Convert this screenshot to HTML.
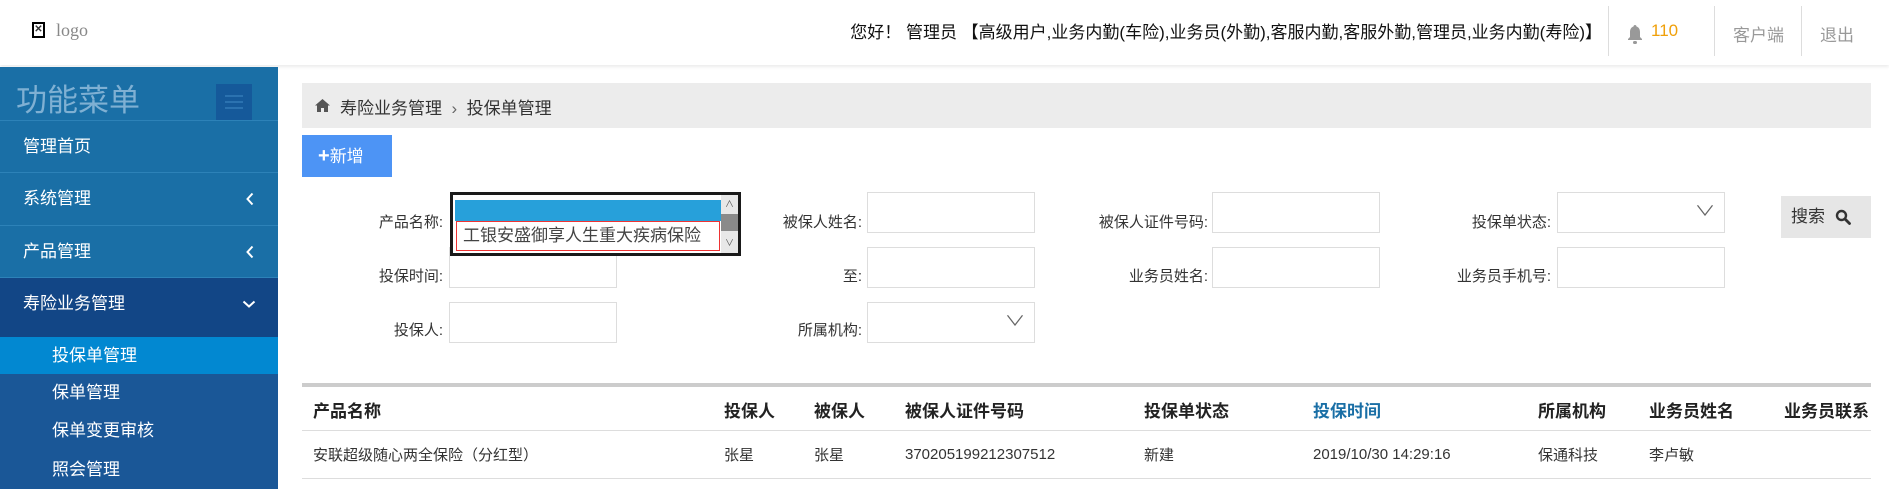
<!DOCTYPE html>
<html><head><meta charset="utf-8"><style>
*{margin:0;padding:0;box-sizing:border-box}
body{width:1889px;height:489px;overflow:hidden;background:#fff;font-family:"Liberation Sans","Noto Sans CJK SC",sans-serif;font-size:17px;color:#333;position:relative}
.a{position:absolute;white-space:nowrap}
.hdr{left:0;top:0;width:1889px;height:65px;background:#fff;box-shadow:0 2px 3px rgba(0,0,0,.08)}
.sep{position:absolute;top:6px;width:1px;height:50px;background:#ddd}
.side{left:0;top:67px;width:278px;height:422px;background:#1a6fa6}
.mi{position:absolute;left:0;width:278px;color:#fff;padding-left:23px;border-top:1px solid #2d82b8}
.sub{position:absolute;left:0;width:278px;color:#fff;padding-left:52px;font-size:17px}
.chev{position:absolute;right:24px;top:19px}
.lbl{position:absolute;text-align:right;font-size:15px;color:#333}
.inp{position:absolute;border:1px solid #ddd;background:#fff;height:41px;width:168px}
.th{position:absolute;top:397px;font-weight:bold;font-size:17px;color:#222}
.td{position:absolute;top:444px;font-size:15px;color:#333}
</style></head><body>
<div class="a hdr">
 <div class="a" style="left:32px;top:22px;width:13px;height:16px;border:2px solid #000;font-size:10px;line-height:11px;text-align:center;font-weight:bold">✕</div>
 <div class="a" style="left:56px;top:20px;font-family:'Liberation Serif',serif;font-size:18px;color:#888">logo</div>
 <div class="a" style="right:287px;top:18px;font-size:17px;color:#111">您好！ 管理员 【高级用户,业务内勤(车险),业务员(外勤),客服内勤,客服外勤,管理员,业务内勤(寿险)】</div>
 <div class="sep" style="left:1608px"></div><div class="sep" style="left:1714px"></div><div class="sep" style="left:1801px"></div>
 <svg class="a" style="left:1627px;top:24px" width="16" height="20" viewBox="0 0 16 20"><path d="M8 1c-1 0-1.5.8-1.5 1.5C4 3.3 3 5.5 3 8v5l-2 2v1h14v-1l-2-2V8c0-2.5-1-4.7-3.5-5.5C9.5 1.8 9 1 8 1z" fill="#999"/><rect x="6" y="17" width="4" height="3" rx="1.5" fill="#999"/></svg>
 <div class="a" style="left:1651px;top:21px;color:#f0a00a;font-size:17px">110</div>
 <div class="a" style="left:1733px;top:21px;color:#999;font-size:17px">客户端</div>
 <div class="a" style="left:1820px;top:21px;color:#999;font-size:17px">退出</div>
</div>
<div class="a side">
 <div class="a" style="left:16px;top:8px;font-size:31px;color:#7fb0d3">功能菜单</div>
 <div class="a" style="left:216px;top:17px;width:36px;height:36px;background:#15599a">
  <div class="a" style="left:9px;top:11px;width:18px;height:2px;background:#2b72b0"></div>
  <div class="a" style="left:9px;top:17px;width:18px;height:2px;background:#2b72b0"></div>
  <div class="a" style="left:9px;top:23px;width:18px;height:2px;background:#2b72b0"></div>
 </div>
 <div class="mi" style="top:53px;height:52px;line-height:52px">管理首页</div>
 <div class="mi" style="top:105px;height:53px;line-height:52px">系统管理<svg class="chev" width="8" height="14" viewBox="0 0 8 14"><path d="M6.5 1.5L1.5 7l5 5.5" stroke="#fff" stroke-width="2" fill="none"/></svg></div>
 <div class="mi" style="top:158px;height:52px;line-height:52px">产品管理<svg class="chev" width="8" height="14" viewBox="0 0 8 14"><path d="M6.5 1.5L1.5 7l5 5.5" stroke="#fff" stroke-width="2" fill="none"/></svg></div>
 <div class="mi" style="top:210px;height:60px;line-height:52px;background:#124686;border-top:1px solid #2d82b8">寿险业务管理<svg class="chev" style="top:22px;right:22px" width="14" height="8" viewBox="0 0 14 8"><path d="M1.5 1.5L7 6.5l5.5-5" stroke="#fff" stroke-width="2" fill="none"/></svg></div>
 <div class="a" style="left:0;top:270px;width:278px;height:152px;background:#1a5797"></div>
 <div class="sub" style="top:270px;height:37px;line-height:37px;background:#0288d1">投保单管理</div>
 <div class="sub" style="top:307px;height:38px;line-height:38px">保单管理</div>
 <div class="sub" style="top:345px;height:38px;line-height:38px">保单变更审核</div>
 <div class="sub" style="top:383px;height:39px;line-height:39px">照会管理</div>
</div>
<div class="a" style="left:302px;top:83px;width:1569px;height:45px;background:#ececec"></div>
<svg class="a" style="left:315px;top:99px" width="15" height="13" viewBox="0 0 15 13"><path d="M7.5 0L0 6.5h2V13h4V9h3v4h4V6.5h2z" fill="#555"/></svg>
<div class="a" style="left:340px;top:94px;font-size:17px;color:#333">寿险业务管理 &nbsp;<span style="color:#666">›</span>&nbsp; 投保单管理</div>
<div class="a" style="left:302px;top:135px;width:90px;height:42px;background:#4d94f5;color:#fff;font-size:17px;line-height:42px;padding-left:16px"><b style="font-size:20px">+</b>新增</div>

<div class="lbl" style="right:1446px;top:211px">产品名称:</div>
<div class="lbl" style="right:1027px;top:211px">被保人姓名:</div>
<div class="lbl" style="right:681px;top:211px">被保人证件号码:</div>
<div class="lbl" style="right:338px;top:211px">投保单状态:</div>
<div class="lbl" style="right:1446px;top:265px">投保时间:</div>
<div class="lbl" style="right:1027px;top:265px">至:</div>
<div class="lbl" style="right:681px;top:265px">业务员姓名:</div>
<div class="lbl" style="right:338px;top:265px">业务员手机号:</div>
<div class="lbl" style="right:1446px;top:319px">投保人:</div>
<div class="lbl" style="right:1027px;top:319px">所属机构:</div>

<div class="inp" style="left:867px;top:192px"></div>
<div class="inp" style="left:1212px;top:192px"></div>
<div class="inp" style="left:1557px;top:192px"><span class="a" style="right:12px;top:8px;color:#666;font-size:14px;transform:scaleX(1.5)">&#8744;</span></div>
<div class="inp" style="left:449px;top:247px"></div>
<div class="inp" style="left:867px;top:247px"></div>
<div class="inp" style="left:1212px;top:247px"></div>
<div class="inp" style="left:1557px;top:247px"></div>
<div class="inp" style="left:449px;top:302px"></div>
<div class="inp" style="left:867px;top:302px"><span class="a" style="right:12px;top:8px;color:#666;font-size:14px;transform:scaleX(1.5)">&#8744;</span></div>
<div class="a" style="left:1781px;top:196px;width:90px;height:42px;background:#e6e6e6;font-size:17px;line-height:42px;padding-left:10px;color:#333">搜索<svg style="position:absolute;left:54px;top:13px" width="16" height="16" viewBox="0 0 16 16"><circle cx="6.5" cy="6.5" r="4.5" stroke="#333" stroke-width="2.4" fill="none"/><path d="M10 10l4.5 4.5" stroke="#333" stroke-width="2.8" stroke-linecap="round"/></svg></div>

<div class="a" style="left:450px;top:192px;width:291px;height:64px;border:3px solid #1a1a1a;background:#fff">
 <div class="a" style="left:2px;top:5px;width:266px;height:21px;background:#27a0da"></div>
 <div class="a" style="left:3px;top:26px;width:264px;height:30px;border:1px solid #e33;font-size:17px;line-height:28px;padding-left:6px;color:#444">工银安盛御享人生重大疾病保险</div>
 <div class="a" style="left:268px;top:0;width:17px;height:58px;background:#e8e8e8">
  <div class="a" style="left:0;top:19px;width:17px;height:17px;background:#8a8a8a"></div>
  <div class="a" style="left:4px;top:2px;font-size:9px;color:#555">&#8743;</div>
  <div class="a" style="left:4px;top:41px;font-size:9px;color:#555">&#8744;</div>
 </div>
</div>

<div class="a" style="left:302px;top:383px;width:1569px;height:4px;background:#ccc"></div>
<div class="a" style="left:302px;top:430px;width:1569px;height:1px;background:#ddd"></div>
<div class="a" style="left:302px;top:478px;width:1569px;height:1px;background:#ddd"></div>
<div class="th" style="left:313px">产品名称</div>
<div class="th" style="left:724px">投保人</div>
<div class="th" style="left:814px">被保人</div>
<div class="th" style="left:905px">被保人证件号码</div>
<div class="th" style="left:1144px">投保单状态</div>
<div class="th" style="left:1313px;color:#1a6fa6">投保时间</div>
<div class="th" style="left:1538px">所属机构</div>
<div class="th" style="left:1649px">业务员姓名</div>
<div class="th" style="left:1784px">业务员联系</div>
<div class="td" style="left:313px">安联超级随心两全保险（分红型）</div>
<div class="td" style="left:724px">张星</div>
<div class="td" style="left:814px">张星</div>
<div class="td" style="left:905px;top:446px">370205199212307512</div>
<div class="td" style="left:1144px">新建</div>
<div class="td" style="left:1313px;top:446px">2019/10/30 14:29:16</div>
<div class="td" style="left:1538px">保通科技</div>
<div class="td" style="left:1649px">李卢敏</div>
</body></html>
